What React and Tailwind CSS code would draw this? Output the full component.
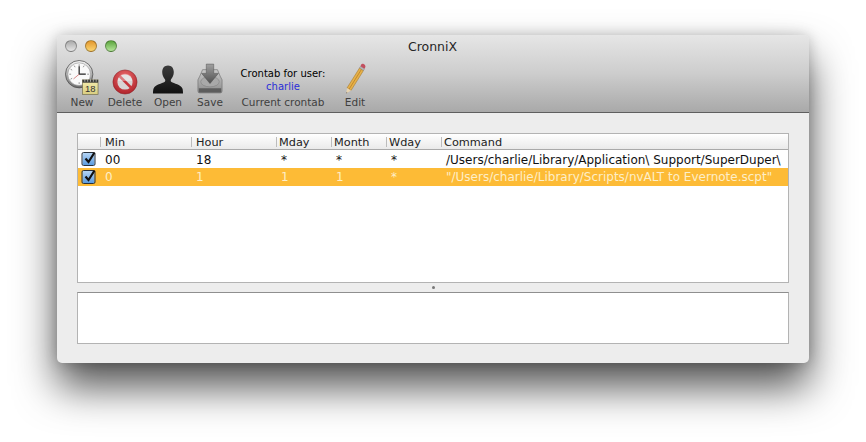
const font = { fontFamily: '"DejaVu Sans", sans-serif' };

const ClockIcon = () => (
  <svg width="34" height="35" viewBox="0 0 36 37">
    <defs>
      <linearGradient id="clockRim" x1="0" y1="0" x2="0" y2="1">
        <stop offset="0" stopColor="#f4f4f4" />
        <stop offset="1" stopColor="#6e6e6e" />
      </linearGradient>
      <linearGradient id="calTop" x1="0" y1="0" x2="0" y2="1">
        <stop offset="0" stopColor="#f6eeb0" />
        <stop offset="1" stopColor="#d9cd80" />
      </linearGradient>
    </defs>
    <circle cx="15" cy="15" r="14.5" fill="url(#clockRim)" stroke="#4c4c4c" strokeWidth="0.8" />
    <circle cx="15" cy="15" r="12" fill="#fafafa" stroke="#8d8d8d" strokeWidth="0.6" />
    <path d="M15 4.500v2M15 23.500v2M4.500 15h2M23.500 15h2M9.700 5.900l1 1.700M20.300 5.900l-1 1.700M5.900 9.700l1.700 1M5.900 20.300l1.700-1" stroke="#777" strokeWidth="0.8" />
    <path d="M15 15V6.500" stroke="#222" strokeWidth="1.3" />
    <path d="M15 15h7" stroke="#222" strokeWidth="1.3" />
    <path d="M15 15l-6 5" stroke="#b33" strokeWidth="0.6" />
    <rect x="18.500" y="21" width="16.500" height="15.500" fill="url(#calTop)" stroke="#6d684a" strokeWidth="0.7" />
    <rect x="18.500" y="21" width="16.500" height="3" fill="#3d3d38" />
    <path d="M21 20.500v2.500M24 20.500v2.500M27 20.500v2.500M30 20.500v2.500M33 20.500v2.500" stroke="#ddd" strokeWidth="0.7" />
    <text x="26.800" y="34" textAnchor="middle" fontSize="10" fill="#333" fontFamily="Liberation Sans, sans-serif">18</text>
  </svg>
);

const DeleteIcon = () => (
  <svg width="26" height="26" viewBox="0 0 28 28">
    <defs>
      <radialGradient id="noRed" cx="0.5" cy="0.3" r="0.8">
        <stop offset="0" stopColor="#ea6a6c" />
        <stop offset="1" stopColor="#a81a22" />
      </radialGradient>
    </defs>
    <circle cx="14" cy="14" r="13" fill="url(#noRed)" stroke="#8b2228" strokeWidth="0.6" />
    <circle cx="14" cy="14" r="8.200" fill="#d8d4d4" />
    <path d="M7 8.500L19.500 21 21.500 19 9 6.500z" fill="#c7343a" />
    <path d="M6 13a8 8 0 0 1 16 0" fill="#ffffff" opacity="0.35" />
  </svg>
);

const UserIcon = () => (
  <svg width="30" height="30" viewBox="0 0 30 30">
    <defs>
      <linearGradient id="userFill" x1="0" y1="0" x2="0" y2="1">
        <stop offset="0" stopColor="#3c3c3c" />
        <stop offset="1" stopColor="#111" />
      </linearGradient>
    </defs>
    <path d="M15 0.500c3.700 0 5.800 2.800 5.800 6.600 0 3-1.200 5.600-2.700 7.100-.6.7-.5 2.200.4 2.800 2.300 1.300 9.300 2.800 10.800 6.300.6 1.400.7 3.200.7 5.200H0c0-2 .1-3.800.7-5.200 1.500-3.500 8.500-5 10.800-6.300.9-.6 1-2.100.4-2.800-1.500-1.500-2.700-4.100-2.700-7.100C9.200 3.300 11.300.5 15 .5z" fill="url(#userFill)" />
  </svg>
);

const SaveIcon = () => (
  <svg width="26" height="33" viewBox="0 0 28 33">
    <defs>
      <linearGradient id="driveBody" x1="0" y1="0" x2="0" y2="1">
        <stop offset="0" stopColor="#c9c9c9" />
        <stop offset="1" stopColor="#8c8c8c" />
      </linearGradient>
      <linearGradient id="arrowFill" x1="0" y1="0" x2="0" y2="1">
        <stop offset="0" stopColor="#a0a0a0" />
        <stop offset="1" stopColor="#505050" />
      </linearGradient>
    </defs>
    <path d="M3 14l3-7h16l3 7 2 4v12a2 2 0 0 1-2 2H3a2 2 0 0 1-2-2V18z" fill="url(#driveBody)" stroke="#6f6f6f" strokeWidth="0.7" />
    <rect x="2" y="27" width="24" height="4.500" fill="#5d5d5d" />
    <ellipse cx="14" cy="20" rx="10" ry="5.500" fill="#a9a9a9" stroke="#7e7e7e" strokeWidth="0.6" />
    <path d="M10 1h8v10h5l-9 11-9-11h5z" fill="url(#arrowFill)" stroke="#4a4a4a" strokeWidth="0.5" />
  </svg>
);

const PencilIcon = () => (
  <svg width="22" height="32" viewBox="0 0 22 32">
    <path d="M15.500 5l4 2.500L7 27.500l-4-2.500z" fill="#e6b14a" stroke="#9a6f25" strokeWidth="0.5" />
    <path d="M17.500 6.300L5 26.300" stroke="#c48a2a" strokeWidth="1" />
    <path d="M3 25l4 2.500-4.800 3z" fill="#e8d4b0" />
    <path d="M2.700 29.300l-.5 1.200 1.200-.7z" fill="#222" />
    <path d="M15.500 5l4 2.500 1-1.700-4-2.500z" fill="#b9b9b9" stroke="#777" strokeWidth="0.4" />
    <path d="M16.500 3.300l4 2.500 .8-1.500c.5-1-.1-2.300-1.300-3-1.200-.8-2.300-.6-2.800.3z" fill="#c2505f" />
  </svg>
);

const Light = ({ className }) => (
  <div className={`w-[12px] h-[12px] rounded-full border border-black/30 ${className}`} />
);

const ToolItem = ({ width, label, children }) => (
  <div className={`flex flex-col items-center shrink-0 ${width}`}>
    <div className="h-[36px] flex items-end justify-center">{children}</div>
    <span className="mt-[1px] text-[10.5px] leading-[13px] text-[#3f3f3f]">{label}</span>
  </div>
);

const CheckBox = () => (
  <div className="relative w-[14px] h-[14px] rounded-[2px] border border-[#27303c] bg-gradient-to-b from-[#b4d4f4] to-[#5b9cdf]">
    <svg className="absolute -top-[3px] left-[0px]" width="15" height="16" viewBox="0 0 15 16">
      <path d="M3 8.500l3 3.500L12 2.500" fill="none" stroke="#111" strokeWidth="2.200" />
    </svg>
  </div>
);

const columns = [
  { name: "Min", width: "w-[91px]", pad: "pl-[4px]" },
  { name: "Hour", width: "w-[85px]", pad: "pl-[4px]" },
  { name: "Mday", width: "w-[55px]", pad: "pl-[2px]" },
  { name: "Month", width: "w-[55px]", pad: "pl-[2px]" },
  { name: "Wday", width: "w-[55px]", pad: "pl-[2px]" },
  { name: "Command", width: "flex-1", pad: "pl-[2px]" },
];

const rows = [
  {
    cells: ["00", "18", "*", "*", "*", "/Users/charlie/Library/Application\\ Support/SuperDuper\\"],
    rowClass: "bg-white text-[#111]",
    cellClass: "pt-[3px]",
  },
  {
    cells: ["0", "1", "1", "1", "*", '"/Users/charlie/Library/Scripts/nvALT to Evernote.scpt"'],
    rowClass: "bg-[#fdbb36] text-[#fdeec8]",
    cellClass: "pt-[1px]",
  },
];

export default function App() {
  return (
    <div className="w-[866px] h-[442px] bg-white overflow-hidden pl-[57px] pt-[35px]" style={font}>
      <div className="w-[752px] h-[328px] flex flex-col rounded-[5px] overflow-hidden bg-[#ededed] shadow-[0_24px_42px_rgba(0,0,0,0.68),0_0_14px_rgba(0,0,0,0.2)]">
        {/* Title bar + toolbar */}
        <div className="h-[78px] shrink-0 relative bg-gradient-to-b from-[#e6e6e6] via-[#cdcdcd] to-[#a9a9a9] border-b border-[#5f5f5f]">
          <div className="flex gap-[8px] pl-[8px] pt-[5px]">
            <Light className="bg-gradient-to-b from-[#a9a9a9] to-[#e6e6e6]" />
            <Light className="bg-gradient-to-b from-[#e2972a] to-[#fbd56f]" />
            <Light className="bg-gradient-to-b from-[#5ba53c] to-[#b5e69a]" />
          </div>
          <div className="absolute top-[4px] left-0 right-0 text-center text-[12.5px] leading-[15px] text-[#262626] pr-[1px]">
            CronniX
          </div>
          <div className="flex items-end pl-[4px] mt-[7px]">
            <ToolItem width="w-[42px]" label="New"><ClockIcon /></ToolItem>
            <ToolItem width="w-[44px]" label="Delete"><DeleteIcon /></ToolItem>
            <ToolItem width="w-[42px]" label="Open"><UserIcon /></ToolItem>
            <ToolItem width="w-[42px]" label="Save"><SaveIcon /></ToolItem>
            <div className="w-[104px] shrink-0 flex flex-col items-center">
              <span className="text-[10px] leading-[13px] text-black">Crontab for user:</span>
              <span className="text-[10px] leading-[13px] text-[#2a2fd8]">charlie</span>
              <span className="mt-[3px] text-[10.5px] leading-[13px] text-[#3f3f3f]">Current crontab</span>
            </div>
            <ToolItem width="w-[40px]" label="Edit"><PencilIcon /></ToolItem>
          </div>
        </div>

        {/* Body */}
        <div className="flex-1 flex flex-col px-[20px] pt-[20px]">
          <div className="h-[150px] shrink-0 border border-[#b3b3b3] bg-white flex flex-col">
            <div className="h-[16px] shrink-0 flex bg-gradient-to-b from-white to-[#eaeaea] border-b border-[#a9a9a9]">
              <div className="w-[22px] shrink-0" />
              {columns.map((col) => (
                <div key={col.name} className={`${col.width} shrink-0 flex items-center`}>
                  <div className="w-px h-[10px] bg-[#bcbcbc] shrink-0" />
                  <span className={`${col.pad} pt-[1px] text-[11.3px] leading-[15px] text-[#222]`}>{col.name}</span>
                </div>
              ))}
            </div>
            {rows.map((row) => (
              <div key={row.cells[0]} className={`h-[18px] shrink-0 flex items-center ${row.rowClass}`}>
                <div className="w-[22px] shrink-0 flex justify-center -translate-x-[0.5px]">
                  <CheckBox />
                </div>
                {row.cells.map((cell, i) => (
                  <div
                    key={i}
                    className={`${columns[i].width} ${row.cellClass} shrink-0 pl-[5px] whitespace-nowrap overflow-hidden text-[12px] leading-[17px]`}
                  >
                    {cell}
                  </div>
                ))}
              </div>
            ))}
          </div>

          {/* Split handle */}
          <div className="h-[9px] shrink-0 flex justify-center items-center">
            <div className="w-[3px] h-[3px] rounded-full bg-[#777]" />
          </div>

          <div className="h-[52px] shrink-0 border border-[#b3b3b3] border-t-[#8f8f8f] bg-white" />
        </div>
      </div>
    </div>
  );
}
